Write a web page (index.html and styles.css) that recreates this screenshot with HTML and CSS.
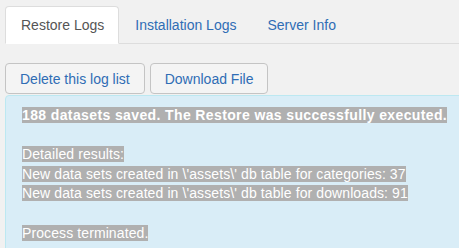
FILE: index.html
```html
<!DOCTYPE html>
<html>
<head>
<meta charset="utf-8">
<link rel="stylesheet" href="styles.css">
</head>
<body>
<div class="page">
  <ul class="tabs">
    <li class="tab active">Restore Logs</li>
    <li class="tab">Installation Logs</li>
    <li class="tab">Server Info</li>
  </ul>
  <div class="toolbar">
    <button class="btn">Delete this log list</button>
    <button class="btn">Download File</button>
  </div>
  <div class="alert">
    <div class="line"><b class="sel bold">188 datasets saved. The Restore was successfully executed.</b></div>
    <div class="line empty"></div>
    <div class="line"><span class="sel">Detailed results:</span></div>
    <div class="line"><span class="sel">New data sets created in \'assets\' db table for categories: 37</span></div>
    <div class="line"><span class="sel">New data sets created in \'assets\' db table for downloads: 91</span></div>
    <div class="line empty"></div>
    <div class="line"><span class="sel">Process terminated.</span></div>
  </div>
</div>
</body>
</html>
```
FILE: styles.css
```css
html, body {
  margin: 0;
  padding: 0;
  overflow: hidden;
  background: #f1f1f1;
}
body {
  font-family: "Liberation Sans", Arial, sans-serif;
  font-size: 14px;
  color: #333;
}
.page {
  width: 520px;
  padding: 6px 0 0 5px;
}
.tabs {
  list-style: none;
  margin: 0;
  padding: 0;
  display: flex;
  border-bottom: 1px solid #dddddd;
}
.tab {
  padding: 9px 14px 9px 15px;
  line-height: 18px;
  margin-bottom: -1px;
  border: 1px solid transparent;
  border-radius: 4px 4px 0 0;
  color: #2f6db5;
}
.tab.active {
  background: #ffffff;
  border-color: #dddddd;
  border-bottom-color: #ffffff;
  color: #555555;
}
.toolbar {
  display: flex;
  gap: 5px;
  margin-top: 19px;
}
.btn {
  font-family: inherit;
  font-size: 14px;
  color: #2f6db5;
  background: #f4f4f4;
  border: 1px solid #c4c4c4;
  border-radius: 4px;
  height: 31px;
  padding: 0 14px;
  margin: 0;
}
.alert {
  margin-top: 1px;
  background: #d9edf7;
  border: 1px solid #bce8f1;
  border-radius: 4px;
  padding: 10px 16px 20px;
  line-height: 19.6px;
  color: #31708f;
}
.line {
  height: 19.6px;
  white-space: nowrap;
}
.sel {
  background: #b0b0b0;
  color: #ffffff;
  letter-spacing: 0.1px;
}
.sel.bold {
  letter-spacing: 0.38px;
}
```
